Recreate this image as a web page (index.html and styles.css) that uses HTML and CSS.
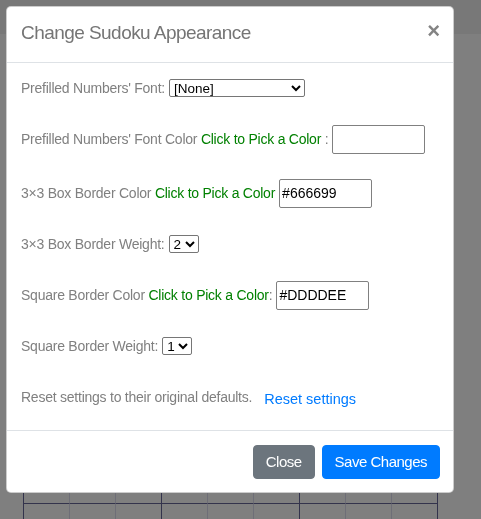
FILE: index.html
```html
<!DOCTYPE html>
<html lang="en">
<head>
<meta charset="utf-8">
<title>Sudoku</title>
<link rel="stylesheet" href="styles.css">
</head>
<body>
<header class="topbar"></header>
<main class="page">
  <div class="board">
    <div class="row"><div class="cell"></div><div class="cell"></div><div class="cell"></div><div class="cell"></div><div class="cell"></div><div class="cell"></div><div class="cell"></div><div class="cell"></div><div class="cell"></div></div>
    <div class="row"><div class="cell"></div><div class="cell"></div><div class="cell"></div><div class="cell"></div><div class="cell"></div><div class="cell"></div><div class="cell"></div><div class="cell"></div><div class="cell"></div></div>
    <div class="row"><div class="cell"></div><div class="cell"></div><div class="cell"></div><div class="cell"></div><div class="cell"></div><div class="cell"></div><div class="cell"></div><div class="cell"></div><div class="cell"></div></div>
    <div class="row"><div class="cell"></div><div class="cell"></div><div class="cell"></div><div class="cell"></div><div class="cell"></div><div class="cell"></div><div class="cell"></div><div class="cell"></div><div class="cell"></div></div>
    <div class="row"><div class="cell"></div><div class="cell"></div><div class="cell"></div><div class="cell"></div><div class="cell"></div><div class="cell"></div><div class="cell"></div><div class="cell"></div><div class="cell"></div></div>
    <div class="row"><div class="cell"></div><div class="cell"></div><div class="cell"></div><div class="cell"></div><div class="cell"></div><div class="cell"></div><div class="cell"></div><div class="cell"></div><div class="cell"></div></div>
    <div class="row"><div class="cell"></div><div class="cell"></div><div class="cell"></div><div class="cell"></div><div class="cell"></div><div class="cell"></div><div class="cell"></div><div class="cell"></div><div class="cell"></div></div>
    <div class="row"><div class="cell"></div><div class="cell"></div><div class="cell"></div><div class="cell"></div><div class="cell"></div><div class="cell"></div><div class="cell"></div><div class="cell"></div><div class="cell"></div></div>
    <div class="row"><div class="cell"></div><div class="cell"></div><div class="cell"></div><div class="cell"></div><div class="cell"></div><div class="cell"></div><div class="cell"></div><div class="cell"></div><div class="cell"></div></div>
  </div>
</main>

<div class="backdrop">
  <div class="modal">
    <div class="modal-header">
      <h5 class="modal-title">Change Sudoku Appearance</h5>
      <button class="close" type="button">&times;</button>
    </div>
    <div class="modal-body">
      <div class="field">
        <span class="label">Prefilled Numbers' Font:</span>
        <select class="sel sel-font"><option>[None]</option><option>Arial</option><option>Verdana</option></select>
      </div>
      <div class="field">
        <span class="label">Prefilled Numbers' Font Color <span class="pick">Click to Pick a Color</span> :</span>
        <input class="color-input" type="text" value="">
      </div>
      <div class="field field-wide">
        <span class="label">3×3 Box Border Color <span class="pick">Click to Pick a Color</span></span>
        <input class="color-input" type="text" value="#666699">
      </div>
      <div class="field">
        <span class="label">3×3 Box Border Weight:</span>
        <select class="sel sel-num"><option>1</option><option selected>2</option><option>3</option></select>
      </div>
      <div class="field">
        <span class="label">Square Border Color <span class="pick">Click to Pick a Color</span>:</span>
        <input class="color-input" type="text" value="#DDDDEE">
      </div>
      <div class="field">
        <span class="label">Square Border Weight:</span>
        <select class="sel sel-num"><option selected>1</option><option>2</option><option>3</option></select>
      </div>
      <div class="field">
        <span class="label">Reset settings to their original defaults.</span>
        <a class="reset-link" href="#">Reset settings</a>
      </div>
    </div>
    <div class="modal-footer">
      <button class="btn btn-secondary" type="button">Close</button>
      <button class="btn btn-primary" type="button">Save Changes</button>
    </div>
  </div>
</div>
</body>
</html>
```
FILE: styles.css
```css
html, body {
  margin: 0;
  padding: 0;
}

body {
  background: #ffffff;
  font-family: "Liberation Sans", Arial, sans-serif;
  width: 481px;
  height: 519px;
  overflow: hidden;
}

.topbar {
  height: 34px;
  background: #f0f0f0;
}

.page {
  box-sizing: border-box;
  height: 485px;
  overflow: hidden;
  padding: 193px 0 0 23px;
}

.board {
  display: flex;
  flex-direction: column;
  width: max-content;
  border-right: 1px solid #666699;
  border-bottom: 1px solid #666699;
}

.row {
  display: flex;
}

.cell {
  box-sizing: border-box;
  width: 46px;
  height: 46px;
  border-left: 1px solid #ddddee;
  border-top: 1px solid #ddddee;
}

.cell:nth-child(3n+1) {
  border-left-color: #666699;
}

.row:nth-child(3n+1) .cell {
  border-top-color: #666699;
}

/* overlay */
.backdrop {
  position: fixed;
  inset: 0;
  background: rgba(0, 0, 0, 0.5);
}

.modal {
  margin: 6px;
  width: 448px;
  box-sizing: border-box;
  background: #ffffff;
  border: 1px solid rgba(0, 0, 0, 0.2);
  border-radius: 5px;
}

.modal-header {
  display: flex;
  align-items: flex-start;
  padding: 14px 13px 17px 14px;
  border-bottom: 1px solid #dee2e6;
}

.modal-title {
  margin: 0;
  font-size: 19px;
  font-weight: 400;
  line-height: 24px;
  letter-spacing: -0.55px;
  color: #757575;
}

.close {
  margin-left: auto;
  padding: 0;
  border: 0;
  background: transparent;
  font-family: "Liberation Sans", Arial, sans-serif;
  font-size: 22px;
  font-weight: 700;
  line-height: 20px;
  color: #848484;
}

.modal-body {
  display: flex;
  flex-direction: column;
  gap: 17px;
  padding: 8px 13px 16px 14px;
}

.field {
  display: flex;
  align-items: center;
  gap: 4px;
  height: 34px;
  font-size: 14px;
  letter-spacing: -0.24px;
  color: #808080;
}

.field-wide {
  margin-top: 3px;
}

.label {
  white-space: nowrap;
}

.pick {
  color: #008000;
}

.sel {
  box-sizing: border-box;
  height: 18px;
  font-family: "Liberation Sans", Arial, sans-serif;
  font-size: 13.5px;
  line-height: 16px;
  letter-spacing: 0;
  color: #000000;
  border: 1px solid #767676;
  border-radius: 2px;
  padding: 0;
  background: #ffffff;
}

.sel-font {
  width: 136px;
}

.sel-num {
  width: 30px;
}

.color-input {
  box-sizing: border-box;
  width: 93px;
  height: 29px;
  padding: 1px 2px;
  font-family: "Liberation Sans", Arial, sans-serif;
  font-size: 14px;
  letter-spacing: 0;
  color: #000000;
  border: 1px solid #808080;
  border-radius: 2px;
}

.reset-link {
  margin-left: 8px;
  margin-top: 3px;
  font-size: 14.5px;
  color: #007bff;
  text-decoration: none;
  letter-spacing: 0;
}

.modal-footer {
  display: flex;
  justify-content: flex-end;
  gap: 7px;
  padding: 14px 13px 13px 13px;
  border-top: 1px solid #dee2e6;
}

.btn {
  height: 34px;
  padding: 0 12px;
  border: 1px solid transparent;
  border-radius: 4px;
  font-family: "Liberation Sans", Arial, sans-serif;
  font-size: 15px;
  letter-spacing: -0.5px;
  line-height: 32px;
  color: #ffffff;
}

.btn-secondary {
  background: #6c757d;
  border-color: #6c757d;
}

.btn-primary {
  background: #007bff;
  border-color: #007bff;
}
```
